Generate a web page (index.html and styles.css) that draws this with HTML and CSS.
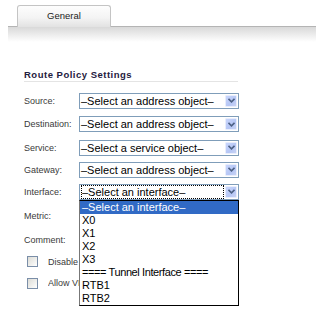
FILE: index.html
```html
<!DOCTYPE html>
<html lang="en">
<head>
    <meta charset="UTF-8">
    <meta name="viewport" content="width=device-width, initial-scale=1.0">
    <title>Route Policy</title>
    <link rel="stylesheet" href="styles.css">
</head>
<body>
    <div class="tabs">
        <div class="tab">General</div>
    </div>
    <div class="band"></div>

    <div class="settings">
        <h3>Route Policy Settings</h3>

        <div class="fields">
            <div class="row">
                <label>Source:</label>
                <div class="select">
                    <span class="value">&ndash;Select an address object&ndash;</span>
                    <span class="arrow"><svg width="7" height="5" viewBox="0 0 7 5"><polyline points="0.5,0.8 3.5,3.8 6.5,0.8" fill="none" stroke="#4d6185" stroke-width="1.6"/></svg></span>
                </div>
            </div>
            <div class="row">
                <label>Destination:</label>
                <div class="select">
                    <span class="value">&ndash;Select an address object&ndash;</span>
                    <span class="arrow"><svg width="7" height="5" viewBox="0 0 7 5"><polyline points="0.5,0.8 3.5,3.8 6.5,0.8" fill="none" stroke="#4d6185" stroke-width="1.6"/></svg></span>
                </div>
            </div>
            <div class="row">
                <label>Service:</label>
                <div class="select">
                    <span class="value">&ndash;Select a service object&ndash;</span>
                    <span class="arrow"><svg width="7" height="5" viewBox="0 0 7 5"><polyline points="0.5,0.8 3.5,3.8 6.5,0.8" fill="none" stroke="#4d6185" stroke-width="1.6"/></svg></span>
                </div>
            </div>
            <div class="row">
                <label>Gateway:</label>
                <div class="select">
                    <span class="value">&ndash;Select an address object&ndash;</span>
                    <span class="arrow"><svg width="7" height="5" viewBox="0 0 7 5"><polyline points="0.5,0.8 3.5,3.8 6.5,0.8" fill="none" stroke="#4d6185" stroke-width="1.6"/></svg></span>
                </div>
            </div>
            <div class="row">
                <label>Interface:</label>
                <div class="select open">
                    <span class="value focus">&ndash;Select an interface&ndash;</span>
                    <span class="arrow"><svg width="7" height="5" viewBox="0 0 7 5"><polyline points="0.5,0.8 3.5,3.8 6.5,0.8" fill="none" stroke="#4d6185" stroke-width="1.6"/></svg></span>
                    <ul class="options">
                        <li class="selected">&ndash;Select an interface&ndash;</li>
                        <li>X0</li>
                        <li>X1</li>
                        <li>X2</li>
                        <li>X3</li>
                        <li class="sep">==== Tunnel Interface ====</li>
                        <li>RTB1</li>
                        <li>RTB2</li>
                    </ul>
                </div>
            </div>
            <div class="row">
                <label>Metric:</label>
            </div>
            <div class="row">
                <label>Comment:</label>
            </div>
            <div class="row check">
                <span class="box"></span>
                <span class="text">Disable route when the interface is disconnected</span>
            </div>
            <div class="row check">
                <span class="box"></span>
                <span class="text">Allow VPN path to take precedence</span>
            </div>
        </div>
    </div>
</body>
</html>
```

FILE: styles.css
```css
html, body {
    min-height: 100%;
}

body {
    margin: 0;
    min-height: 313px;
    background: #fff;
    font-family: "Liberation Sans", Arial, sans-serif;
    color: #333;
}

.tabs {
    padding: 5px 0 0 17px;
    position: relative;
    z-index: 1;
}

.tab {
    width: 92px;
    height: 21px;
    border: 1px solid #c4c4c4;
    border-bottom: none;
    border-radius: 3px 3px 0 0;
    background: linear-gradient(#fdfdfd, #f4f4f4 55%, #e2e2e2);
    font-size: 9.5px;
    line-height: 20px;
    text-align: center;
    color: #222;
    margin-bottom: -1px;
}

.band {
    margin-left: 8px;
    height: 15px;
    border-top: 1px solid #b4b4b4;
    background: linear-gradient(#d9d9d9, #e8e8e8 40%, #fff);
}

.settings {
    margin: 27px 0 0 24px;
    width: 215px;
}

h3 {
    margin: 0 0 7px 0;
    width: 214px;
    height: 12px;
    line-height: 12px;
    font-size: 9.5px;
    letter-spacing: 0.5px;
    color: #1f2040;
    border-bottom: 1px solid #e4e4e4;
}

.fields {
    display: grid;
    grid-template-rows: 23px 24px 23px 21px 23px 26px 22px 21px 22px;
}

.row {
    display: flex;
    align-items: center;
    font-size: 9px;
    color: #3a3a3a;
}

.row label {
    width: 55px;
    flex-shrink: 0;
}

.select {
    position: relative;
    display: flex;
    width: 158px;
    height: 14px;
    border: 1px solid #7f9db9;
    background: #fff;
    font-size: 11px;
    color: #000;
}

.select .value {
    flex: 1;
    line-height: 14px;
    padding-left: 1px;
    white-space: nowrap;
    overflow: hidden;
}

.select .value.focus {
    outline: 1px dotted #000;
    outline-offset: -1px;
    margin: 0 1px 0 1px;
    padding-left: 1px;
}

.arrow {
    width: 12px;
    height: 12px;
    margin: 1px 1px 0 0;
    display: flex;
    align-items: center;
    justify-content: center;
    border: 1px solid #e8edfc;
    background: linear-gradient(135deg, #c9d6fc, #b5c6f5 60%, #c8d2f4);
    border-radius: 1px;
    box-sizing: border-box;
}

.options {
    position: absolute;
    top: 15px;
    left: -1px;
    width: 158px;
    margin: 0;
    padding: 0;
    list-style: none;
    border: 1px solid #000;
    border-left-color: #777;
    background: #fff;
    z-index: 2;
}

.options li {
    height: 13px;
    line-height: 13px;
    padding-left: 2px;
    white-space: nowrap;
}

.options li.selected {
    background: #316ac5;
    color: #fff;
}

.options li.sep {
    letter-spacing: -0.4px;
}

.check {
    padding-left: 3px;
}

.check .box {
    width: 9px;
    height: 9px;
    border: 1px solid #7a8ea8;
    background: linear-gradient(135deg, #dcdcd6, #f4f4f2 70%, #fff);
    margin-right: 10px;
    flex-shrink: 0;
}

/* rest of the label sits under the open list */
.check .text {
    max-width: 188px;
    overflow: hidden;
    white-space: nowrap;
}
```
